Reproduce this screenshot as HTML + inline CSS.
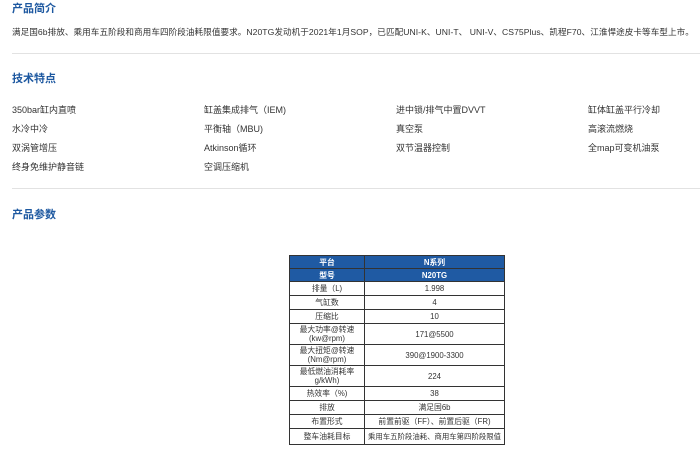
<!DOCTYPE html>
<html><head><meta charset="utf-8"><style>
body{margin:0;width:700px;height:452px;background:#fff;font-family:"Liberation Sans","Noto Sans CJK SC",sans-serif;position:relative;overflow:hidden;color:#333}
.h{position:absolute;left:12px;font-size:11px;font-weight:bold;color:#1d58a0}
.t{position:absolute;font-size:9px;color:#333;white-space:nowrap}
.hr{position:absolute;left:12px;right:0;height:1px;background:#e2e2e2}
table{position:absolute;left:289px;top:255px;width:216px;border-collapse:collapse;font-size:7.8px;color:#333}
td{border:1px solid #333;text-align:center;padding:0;line-height:9px;white-space:nowrap}
td:first-child{width:74px}
tr.b td{background:#1f5aa3;color:#fff;font-weight:bold;height:12px}
</style></head><body>
<div class="h" style="top:0px">产品简介</div>
<div class="t" style="left:12px;top:26px;font-size:8.6px;letter-spacing:0.05px">满足国6b排放、乘用车五阶段和商用车四阶段油耗限值要求。N20TG发动机于2021年1月SOP，已匹配UNI-K、UNI-T、 UNI-V、CS75Plus、凯程F70、江淮悍途皮卡等车型上市。</div>
<div class="hr" style="top:53px"></div>
<div class="h" style="top:70px">技术特点</div>
<div class="t" style="left:12px;top:103px">350bar缸内直喷</div>
<div class="t" style="left:204px;top:103px">缸盖集成排气（IEM)</div>
<div class="t" style="left:396px;top:103px">进中锁/排气中置DVVT</div>
<div class="t" style="left:588px;top:103px">缸体缸盖平行冷却</div>
<div class="t" style="left:12px;top:122px">水冷中冷</div>
<div class="t" style="left:204px;top:122px">平衡轴（MBU)</div>
<div class="t" style="left:396px;top:122px">真空泵</div>
<div class="t" style="left:588px;top:122px">高滚流燃烧</div>
<div class="t" style="left:12px;top:141px">双涡管增压</div>
<div class="t" style="left:204px;top:141px">Atkinson循环</div>
<div class="t" style="left:396px;top:141px">双节温器控制</div>
<div class="t" style="left:588px;top:141px">全map可变机油泵</div>
<div class="t" style="left:12px;top:160px">终身免维护静音链</div>
<div class="t" style="left:204px;top:160px">空调压缩机</div>
<div class="hr" style="top:188px"></div>
<div class="h" style="top:206px">产品参数</div>
<table>
<tr class="b"><td>平台</td><td>N系列</td></tr>
<tr class="b"><td>型号</td><td>N20TG</td></tr>
<tr><td style="height:13px">排量（L)</td><td>1.998</td></tr>
<tr><td style="height:13px">气缸数</td><td>4</td></tr>
<tr><td style="height:13px">压缩比</td><td>10</td></tr>
<tr><td style="height:20px">最大功率@转速<br>(kw@rpm)</td><td>171@5500</td></tr>
<tr><td style="height:20px">最大扭矩@转速<br>(Nm@rpm)</td><td>390@1900-3300</td></tr>
<tr><td style="height:20px">最低燃油消耗率<br>g/kWh)</td><td>224</td></tr>
<tr><td style="height:13px">热效率（%)</td><td>38</td></tr>
<tr><td style="height:13px">排放</td><td>满足国6b</td></tr>
<tr><td style="height:13px">布置形式</td><td>前置前驱（FF）、前置后驱（FR)</td></tr>
<tr><td style="height:15px">整车油耗目标</td><td style="font-size:7.4px">乘用车五阶段油耗、商用车第四阶段限值</td></tr>
</table>
</body></html>
